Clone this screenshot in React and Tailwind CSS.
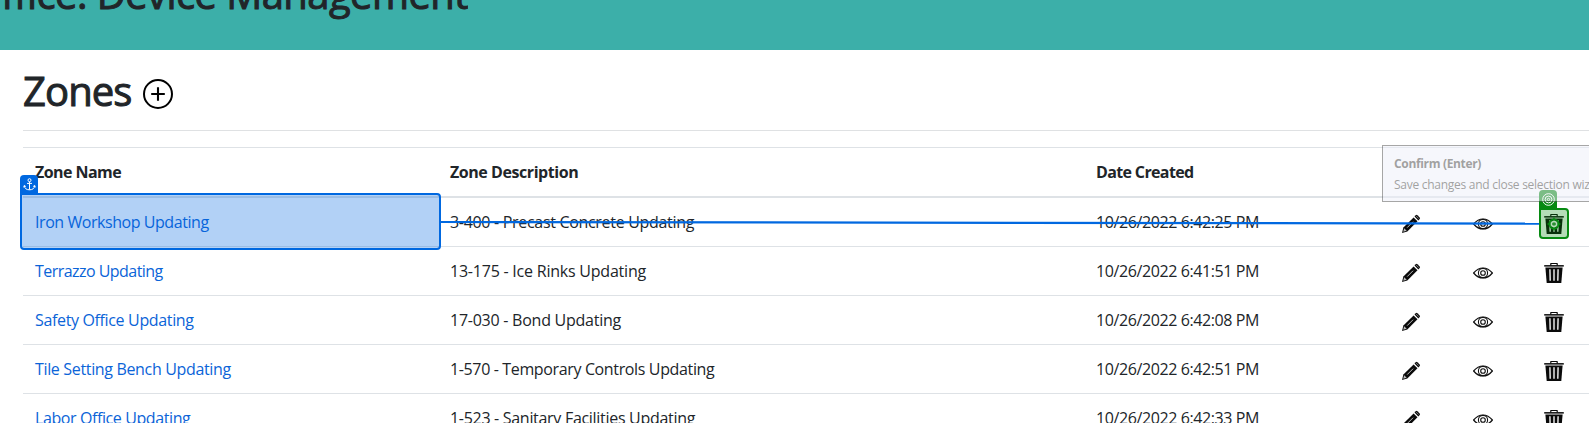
import React from "react";

const rows = [
  { name: "Iron Workshop Updating", nameCls: "tracking-[-0.44px]", desc: "3-400 - Precast Concrete Updating", descCls: "tracking-[-0.31px]", date: "10/26/2022 6:42:25 PM" },
  { name: "Terrazzo Updating", nameCls: "tracking-[-0.54px]", desc: "13-175 - Ice Rinks Updating", descCls: "tracking-[-0.22px]", date: "10/26/2022 6:41:51 PM" },
  { name: "Safety Office Updating", nameCls: "tracking-[-0.35px]", desc: "17-030 - Bond Updating", descCls: "tracking-[-0.25px]", date: "10/26/2022 6:42:08 PM" },
  { name: "Tile Setting Bench Updating", nameCls: "tracking-[-0.34px]", desc: "1-570 - Temporary Controls Updating", descCls: "tracking-[-0.36px]", date: "10/26/2022 6:42:51 PM" },
  { name: "Labor Office Updating", nameCls: "tracking-[-0.4px]", desc: "1-523 - Sanitary Facilities Updating", descCls: "tracking-[-0.3px]", date: "10/26/2022 6:42:33 PM" },
];

const columns = "grid grid-cols-[415px_646px_305px_72px_71px_57px]";

function PlusCircle() {
  return (
    <svg className="size-[30px] shrink-0" viewBox="0 0 30 30" fill="none" stroke="#000">
      <circle cx="15" cy="15" r="14" strokeWidth="2" />
      <path d="M15 8.2v13.6M8.2 15h13.6" strokeWidth="2.1" />
    </svg>
  );
}

function Pencil() {
  return (
    <svg className="size-5" viewBox="0 0 20 20">
      <path d="M1 19l1.4-5.4L12.6 3.4l3.9 3.9L6.3 17.5z" fill="#0a0a0a" />
      <path d="M13.5 2.5l1.3-1.3q.8-.7 1.6 0l2.3 2.3q.7.8 0 1.6l-1.3 1.3z" fill="#0a0a0a" />
      <path d="M2.2 17.8l1-3.6 2.5 2.5z" fill="#bbb" />
      <path d="M6.2 13.6l5.9-5.9" stroke="#bbb" strokeWidth="1" />
      <path d="M15.2 2.1l2.5 2.5" stroke="#999" strokeWidth=".8" />
    </svg>
  );
}

function Eye() {
  return (
    <svg className="size-5" viewBox="0 0 20 20" fill="none" stroke="#111">
      <path d="M.6 10Q4.8 5 10 5t9.4 5Q15.2 15 10 15T.6 10z" strokeWidth="1.2" />
      <circle cx="10" cy="10" r="4.6" strokeWidth="1.1" />
      <circle cx="10" cy="10" r="2.3" strokeWidth="1.1" />
    </svg>
  );
}

function Trash() {
  return (
    <svg className="size-5" viewBox="0 0 20 20">
      <path d="M6.8 2.5V1q0-.7.7-.7h5q.7 0 .7.7v1.5" fill="none" stroke="#0a0a0a" strokeWidth="1.2" />
      <path d="M.2 2.1h19.6v1.5H.2z" fill="#0a0a0a" />
      <path d="M1.4 4.4h17.2L17.3 20H2.7z" fill="#0a0a0a" />
      <path d="M5.9 6.2l.3 11.5M10 6.2v11.5M14.1 6.2l-.3 11.5" stroke="#e5e5e5" strokeWidth="1.5" />
    </svg>
  );
}

function Anchor() {
  return (
    <svg className="size-[13px]" viewBox="0 0 13 13" fill="none" stroke="#fff" strokeWidth="1">
      <circle cx="6.5" cy="2.2" r="1.5" />
      <path d="M6.5 3.7v8M4 5.4h5M1.3 7.8q.5 4 5.2 4t5.2-4M.6 9.3l.8-1.9 1.5 1.2M12.4 9.3l-.8-1.9-1.5 1.2" />
    </svg>
  );
}

function Target() {
  return (
    <svg className="size-[13px]" viewBox="0 0 13 13" fill="none" stroke="#fff">
      <circle cx="6.5" cy="6.5" r="5.8" />
      <circle cx="6.5" cy="6.5" r="3.4" />
      <circle cx="6.5" cy="6.5" r="1.2" />
    </svg>
  );
}

export default function App() {
  return (
    <div className="relative h-[423px] w-[1589px] overflow-hidden bg-white font-['Open_Sans',sans-serif] text-base text-[#212529]">
      <header className="h-[50px] bg-[#3cafa9]">
        <div className="flex h-[50px] w-[468px] justify-end overflow-hidden whitespace-nowrap">
          <h1 className="-mt-[30px] text-[40px] leading-[48px] font-medium tracking-[-0.57px] [-webkit-text-stroke:1px_#212529]">Office: Device Management</h1>
        </div>
      </header>

      <main className="pl-[23px]">
        <div className="flex h-[80px] items-center gap-[11px]">
          <h2 className="mt-[2px] w-[109px] text-[40px] leading-[48px] font-medium tracking-[-0.9px] whitespace-nowrap [-webkit-text-stroke:1px_#212529]">Zones</h2>
          <div className="mt-[8px]"><PlusCircle /></div>
        </div>
        <div className="h-[17px] border-t border-[#dfe1e3]" />

        <div className="w-[1566px] border-t border-[#dee2e6]">
          <div className={`${columns} h-[50px] items-center border-b-2 border-[#dee2e6] font-bold whitespace-nowrap`}>
            <div className="pl-3 tracking-[-0.55px]">Zone Name</div>
            <div className="pl-3 tracking-[-0.44px]">Zone Description</div>
            <div className="pl-3 tracking-[-0.64px]">Date Created</div>
          </div>
          {rows.map((r) => (
            <div key={r.name} className={`${columns} h-[49px] items-center border-b border-[#dee2e6] whitespace-nowrap`}>
              <div className={`pl-3 text-[#0b64d8] ${r.nameCls}`}>{r.name}</div>
              <div className={`pl-3 ${r.descCls}`}>{r.desc}</div>
              <div className="pl-3 tracking-[-0.4px]">{r.date}</div>
              <div className="pt-[4px] pl-3"><Pencil /></div>
              <div className="pt-[4px] pl-3"><Eye /></div>
              <div className="pt-[4px] pl-3"><Trash /></div>
            </div>
          ))}
        </div>
      </main>

      <svg className="absolute top-[215px] left-[441px] h-4 w-[1099px]" viewBox="0 0 1099 16">
        <path d="M0 7L1099 8.6" stroke="#0068e0" strokeWidth="2.2" />
      </svg>

      <div className="absolute top-[175px] left-5 flex h-[19px] w-[18px] items-center justify-center rounded-t-[4px] bg-[#0068e0]"><Anchor /></div>
      <div className="absolute top-[193px] left-5 h-[57px] w-[421px] rounded-[4px] rounded-tl-none border-2 border-[#0068e0] bg-[#0068e0]/30" />

      <div className="absolute top-[190px] left-[1539px] flex h-[19px] w-[18px] items-center justify-center rounded-t-[4px] bg-[#078a12]"><Target /></div>
      <div className="absolute top-[208px] left-[1539px] flex h-[31px] w-[30px] items-center justify-center rounded-[4px] rounded-tl-none border-2 border-[#078a12] bg-[#078a12]/30">
        <svg className="size-4" viewBox="0 0 16 16" fill="none" stroke="#078a12">
          <circle cx="8" cy="8" r="4.8" fill="#078a12" fillOpacity=".7" strokeWidth="1.5" />
          <circle cx="8" cy="8" r="2.5" stroke="#b5dcb8" strokeWidth="1.4" />
          <path d="M8 1.5v2.5M8 12v2.5M1.5 8H4M12 8h2.5" strokeWidth="1.4" />
        </svg>
      </div>

      <div className="absolute top-[145px] left-[1382px] flex h-[57px] w-[260px] flex-col border border-[#505050] bg-[#eff1fa] pt-[7px] pl-[11px] text-xs whitespace-nowrap text-[#454545] opacity-50">
        <div className="h-[22px] leading-[22px] font-bold tracking-[-0.34px]">Confirm (Enter)</div>
        <div className="h-5 leading-5 tracking-[-0.27px]">Save changes and close selection wizard</div>
      </div>
    </div>
  );
}
